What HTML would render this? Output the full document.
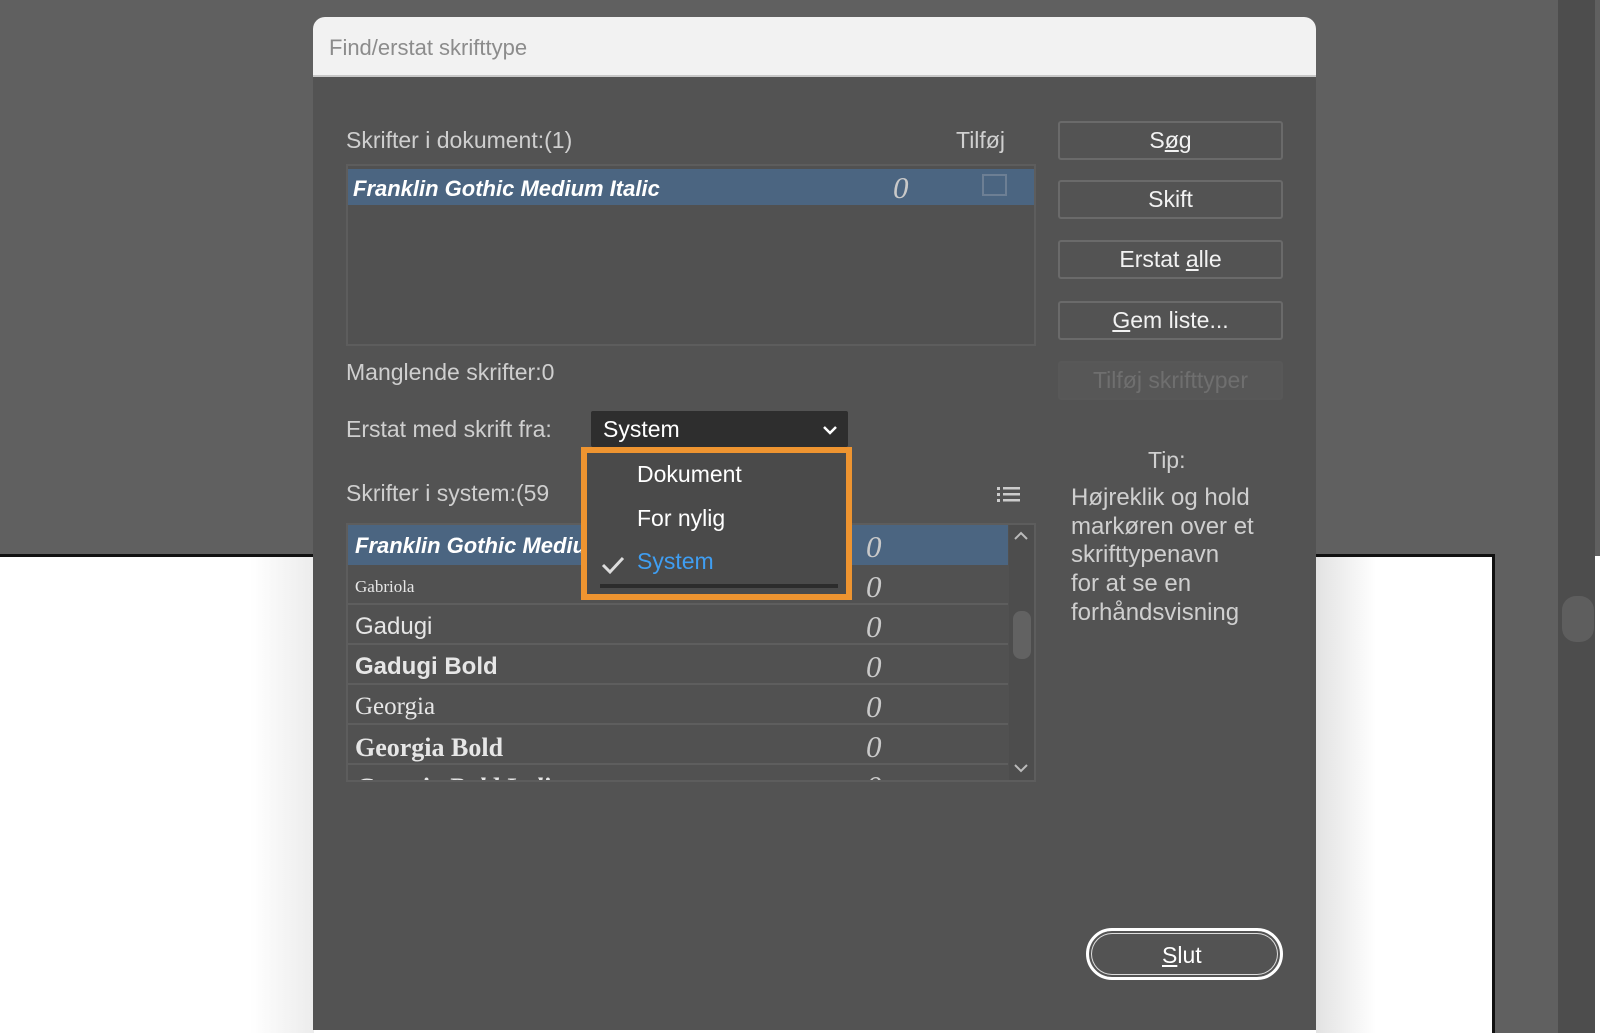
<!DOCTYPE html>
<html><head><meta charset="utf-8"><style>
*{margin:0;padding:0;box-sizing:border-box}
body{width:1600px;height:1033px;position:relative;overflow:hidden;background:#fff;font-family:"Segoe UI","Liberation Sans",sans-serif}
.a{position:absolute}
.t{position:absolute;white-space:nowrap;font-size:22px;color:#cfcfcf;line-height:1}
.btn{position:absolute;left:1058px;width:225px;height:39px;border:2px solid #6a6a6a;border-radius:3px;color:#f2f2f2;font-size:23px;text-align:center;line-height:35px}
.row{position:absolute;left:0;width:660px;height:40px;border-bottom:2px solid #5e5e5e}
.row span{position:absolute;left:7px;top:8px;font-size:23px;color:#e6e6e6;white-space:nowrap}
.z{position:absolute;left:518px;top:4px;font-family:"Liberation Serif",serif;font-style:italic;font-size:31px;color:#c9c9c9}
</style></head><body>
<div class="a" style="left:0;top:0;width:1600px;height:556px;background:#606060"></div>
<div class="a" style="left:0;top:554px;width:1493px;height:3px;background:#111"></div>
<div class="a" style="left:1492px;top:554px;width:3px;height:479px;background:#111"></div>
<div class="a" style="left:1495px;top:556px;width:63px;height:477px;background:#606060"></div>
<div class="a" style="left:1558px;top:0;width:37px;height:1033px;background:#4d4d4d"></div>
<div class="a" style="left:1562px;top:596px;width:32px;height:46px;border-radius:14px;background:#5e5e5e"></div>
<div class="a" style="left:1316px;top:557px;width:60px;height:476px;background:linear-gradient(90deg,#e2e2e2,#fff)"></div>
<div class="a" style="left:250px;top:557px;width:64px;height:476px;background:linear-gradient(90deg,#fff,#ececec)"></div>

<div class="a" style="left:313px;top:17px;width:1003px;height:1013px;background:#535353;border-radius:12px 12px 0 0;overflow:hidden">
<div class="a" style="left:0;top:0;width:1003px;height:60px;background:#f2f2f2;border-bottom:2px solid #c8c8c8"></div>
</div>
<div class="t" style="left:329px;top:37px;color:#8c8c8c;font-size:22px">Find/erstat skrifttype</div>

<div class="t" style="left:346px;top:129px;font-size:23px">Skrifter i dokument:(1)</div>
<div class="t" style="left:956px;top:129px;font-size:23px">Tilføj</div>
<div class="a" style="left:346px;top:164px;width:690px;height:182px;border:2px solid #5d5d5d;background:#515151"></div>
<div class="a" style="left:348px;top:169px;width:686px;height:36px;background:#4b6581"></div>
<div class="t" style="left:353px;top:178px;font-style:italic;font-weight:bold;color:#fff;font-size:22px">Franklin Gothic Medium Italic</div>
<div class="t" style="left:893px;top:172px;font-family:'Liberation Serif',serif;font-style:italic;font-size:31px;color:#c9c9c9">0</div>
<div class="a" style="left:982px;top:174px;width:25px;height:22px;border:2px solid #6d7f94"></div>

<div class="btn" style="top:121px">S<u>ø</u>g</div>
<div class="btn" style="top:180px">Skift</div>
<div class="btn" style="top:240px">Erstat <u>a</u>lle</div>
<div class="btn" style="top:301px"><u>G</u>em liste...</div>
<div class="btn" style="top:361px;border-color:#585858;background:#575757;color:#6f6f6f">Tilføj skrifttyper</div>

<div class="t" style="left:346px;top:361px;font-size:23px">Manglende skrifter:0</div>
<div class="t" style="left:346px;top:418px;font-size:23px">Erstat med skrift fra:</div>
<div class="a" style="left:591px;top:411px;width:257px;height:36px;background:#2e2e2e;border-radius:2px"></div>
<div class="t" style="left:603px;top:418px;color:#fff;font-size:23px">System</div>
<svg class="a" style="left:822px;top:424px" width="16" height="12"><path d="M2 3 L8 9 L14 3" stroke="#fff" stroke-width="2.5" fill="none"/></svg>

<div class="t" style="left:346px;top:482px;font-size:23px">Skrifter i system:(59</div>
<svg class="a" style="left:997px;top:485px" width="24" height="20"><g fill="#ccc"><rect x="0" y="2" width="3" height="3"/><rect x="0" y="8" width="3" height="3"/><rect x="0" y="14" width="3" height="3"/><rect x="6" y="2" width="17" height="2.5"/><rect x="6" y="8" width="17" height="2.5"/><rect x="6" y="14" width="17" height="2.5"/></g></svg>

<div class="a" style="left:346px;top:523px;width:690px;height:259px;border:2px solid #5d5d5d;background:#515151;overflow:hidden">
 <div class="row" style="top:0;background:#4b6581;border:none;height:40px"><span style="font-style:italic;font-weight:bold;color:#fff;font-size:22px">Franklin Gothic Medium Italic</span><div class="z">0</div></div>
 <div class="row" style="top:40px"><span style="font-family:'Liberation Serif',serif;font-size:17px;top:12px">Gabriola</span><div class="z">0</div></div>
 <div class="row" style="top:80px"><span style="font-size:24px">Gadugi</span><div class="z">0</div></div>
 <div class="row" style="top:120px"><span style="font-weight:bold;font-size:24px">Gadugi Bold</span><div class="z">0</div></div>
 <div class="row" style="top:160px"><span style="font-family:'Liberation Serif',serif;font-size:25px">Georgia</span><div class="z">0</div></div>
 <div class="row" style="top:200px"><span style="font-family:'Liberation Serif',serif;font-weight:bold;font-size:26px">Georgia Bold</span><div class="z">0</div></div>
 <div class="row" style="top:240px"><span style="font-family:'Liberation Serif',serif;font-weight:bold;font-style:italic;font-size:26px">Georgia Bold Italic</span><div class="z">0</div></div>
 <div class="a" style="left:661px;top:0;width:25px;height:257px;background:#4d4d4d"></div>
 <div class="a" style="left:665px;top:86px;width:18px;height:48px;border-radius:8px;background:#626262"></div>
 <svg class="a" style="left:665px;top:6px" width="16" height="10"><path d="M2 8 L8 2 L14 8" stroke="#bbb" stroke-width="2" fill="none"/></svg>
 <svg class="a" style="left:665px;top:238px" width="16" height="10"><path d="M2 2 L8 8 L14 2" stroke="#bbb" stroke-width="2" fill="none"/></svg>
</div>

<div class="a" style="left:581px;top:447px;width:271px;height:153px;border:6px solid #ee9430;background:#4a4a4a"></div>
<div class="a" style="left:600px;top:584px;width:238px;height:4px;background:#2c2c2c"></div>
<div class="t" style="left:637px;top:463px;color:#fff;font-size:23px">Dokument</div>
<div class="t" style="left:637px;top:507px;color:#fff;font-size:23px">For nylig</div>
<div class="t" style="left:637px;top:550px;color:#3f9ef2;font-size:23px">System</div>
<svg class="a" style="left:601px;top:555px" width="24" height="20"><path d="M2 10 L9 17 L22 3" stroke="#ddd" stroke-width="3" fill="none"/></svg>

<div class="t" style="left:1148px;top:449px;font-size:23px">Tip:</div>
<div class="t" style="left:1071px;top:484px;line-height:28.7px;font-size:24px">Højreklik og hold<br>markøren over et<br>skrifttypenavn<br>for at se en<br>forhåndsvisning</div>

<div class="a" style="left:1086px;top:928px;width:197px;height:52px;border:3px solid #fff;border-radius:26px;box-shadow:inset 0 0 0 2px #535353,inset 0 0 0 3px #ddd"></div>
<div class="t" style="left:1162px;top:944px;color:#fff;font-size:23px"><u>S</u>lut</div>
</body></html>
